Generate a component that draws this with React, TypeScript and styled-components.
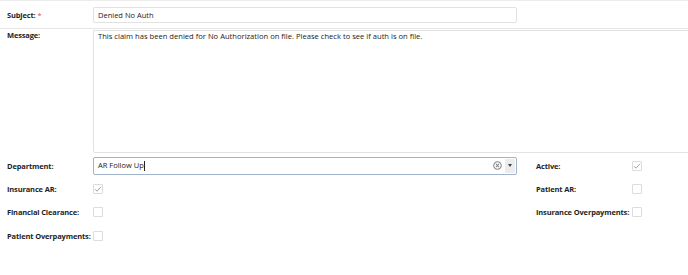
import styled, { createGlobalStyle } from "styled-components";

const Global = createGlobalStyle`
  body {
    margin: 0;
    background: #ffffff;
    font-family: "Open Sans", "DejaVu Sans", sans-serif;
    color: #222;
  }
`;

function Check({ checked }: { checked?: boolean }) {
  return (
    <Box>
      {checked && (
        <svg width="8" height="8" viewBox="0 0 8 8">
          <path d="M1 4.2 L3 6.2 L7 1.8" fill="none" stroke="#9a9a9a" strokeWidth="0.9" />
        </svg>
      )}
    </Box>
  );
}

function App() {
  return (
    <>
      <Global />
      <Form>
        <SubjectRow>
          <Label>
            Subject: <Req>*</Req>
          </Label>
          <TextInput>Denied No Auth</TextInput>
        </SubjectRow>
        <MessageRow>
          <Label>Message:</Label>
          <TextArea>
            This claim has been denied for No Authorization on file. Please check to see if auth is on file.
          </TextArea>
        </MessageRow>
        <Grid>
          <Label>Department:</Label>
          <Combo>
            <span>
              AR Follow Up<Caret />
            </span>
            <ClearIcon>
              <svg width="9" height="9" viewBox="0 0 10 10">
                <circle cx="5" cy="5" r="4.2" fill="none" stroke="#8a8a8a" strokeWidth="1.2" />
                <path d="M3.3 3.3 L6.7 6.7 M6.7 3.3 L3.3 6.7" stroke="#8a8a8a" strokeWidth="1.2" />
              </svg>
            </ClearIcon>
            <DropBtn>
              <svg width="4" height="3" viewBox="0 0 4 3">
                <path d="M0 0 H4 L2 3 Z" fill="#444" />
              </svg>
            </DropBtn>
          </Combo>
          <span />
          <Label>Active:</Label>
          <Check checked />

          <Label>Insurance AR:</Label>
          <Check checked />
          <span />
          <Label>Patient AR:</Label>
          <Check />

          <Label>Financial Clearance:</Label>
          <Check />
          <span />
          <Label>Insurance Overpayments:</Label>
          <Check />

          <Label>Patient Overpayments:</Label>
          <Check />
        </Grid>
      </Form>
    </>
  );
}

export default App;

const Form = styled.div`
  width: 688px;
  height: 275px;
  border-top: 1px solid #ececec;
  box-sizing: border-box;
  overflow: hidden;
`;

const Label = styled.div`
  font-size: 7.5px;
  font-weight: 700;
  letter-spacing: -0.15px;
  color: #1e1e1e;
  white-space: nowrap;
`;

const Req = styled.span`
  color: #d9534f;
  font-weight: 400;
`;

const SubjectRow = styled.div`
  display: flex;
  align-items: center;
  height: 27px;
  padding-left: 7px;
  border-bottom: 1px solid #e6e6e6;

  ${Label} {
    width: 86px;
  }
`;

const TextInput = styled.div`
  width: 424px;
  height: 16px;
  box-sizing: border-box;
  border: 1px solid #e2e2e2;
  border-radius: 2px;
  padding: 0 4px;
  font-size: 7.5px;
  line-height: 14px;
  color: #222;
`;

const MessageRow = styled.div`
  display: flex;
  align-items: flex-start;
  padding-top: 1px;
  padding-left: 7px;

  ${Label} {
    width: 86px;
  }
`;

const TextArea = styled.div`
  flex: 1;
  height: 123px;
  box-sizing: border-box;
  border: 1px solid #e2e2e2;
  border-right: none;
  border-radius: 2px 0 0 2px;
  padding: 0 4px;
  line-height: 11px;
  font-size: 7.6px;
  color: #222;
`;

const Grid = styled.div`
  display: grid;
  grid-template-columns: 86px 424px 19px 96px 12px;
  grid-auto-rows: 23.3px;
  align-items: center;
  padding-left: 7px;
  margin-top: 1px;
`;

const Combo = styled.div`
  height: 18px;
  box-sizing: border-box;
  border: 1px solid #9fb3cc;
  border-radius: 2px;
  display: flex;
  align-items: center;
  padding-left: 4px;
  padding-right: 1px;
  font-size: 7.5px;
  color: #222;

  & > span {
    flex: 1;
  }
`;

const Caret = styled.span`
  display: inline-block;
  width: 1px;
  height: 10px;
  background: #222;
  vertical-align: middle;
`;

const ClearIcon = styled.div`
  width: 12px;
  display: flex;
  justify-content: center;
  margin-right: 2px;
`;

const DropBtn = styled.div`
  width: 10px;
  height: 14px;
  background: #ececec;
  border-radius: 1px;
  display: flex;
  align-items: center;
  justify-content: center;
`;

const Box = styled.div`
  width: 10px;
  height: 10px;
  box-sizing: border-box;
  border: 1px solid #dcdcdc;
  border-radius: 1px;
  display: flex;
  align-items: center;
  justify-content: center;
`;
